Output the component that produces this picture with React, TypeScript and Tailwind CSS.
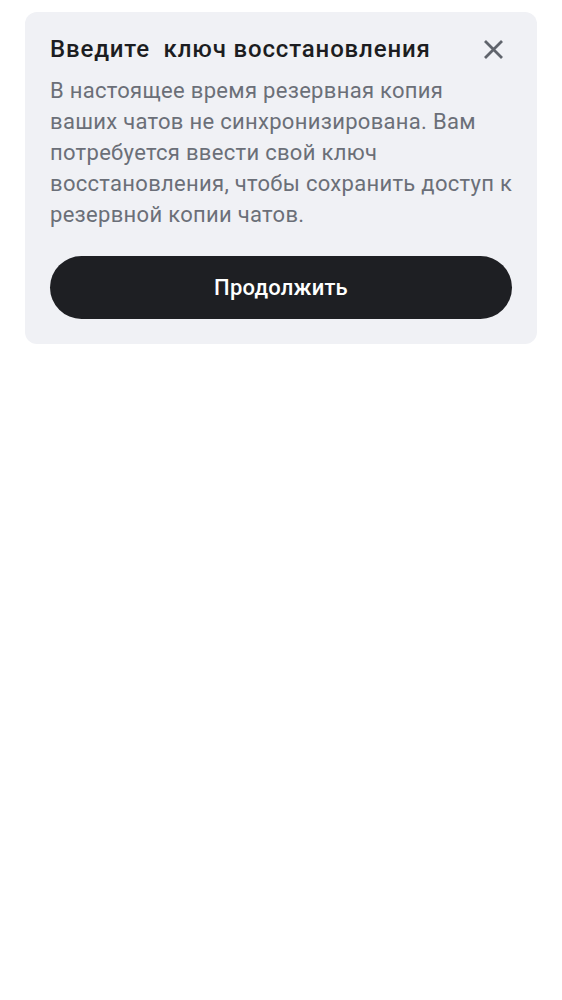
export default function App() {
  return (
    <div className="min-h-[1000px] bg-white px-[25px] pt-[12px]" style={{ fontFamily: "Roboto, 'Noto Sans', sans-serif" }}>
      <div className="rounded-[12px] bg-[#f0f1f5] px-[25px] pt-[22px] pb-[25px]">
        <div className="flex items-start justify-between">
          <h2 className="text-[24px] leading-[30px] font-medium tracking-[0.85px] text-[#1c1d21]">
            Введите&nbsp; ключ восстановления
          </h2>
          <button className="mt-[6px] mr-[9px] text-[#60646c]" aria-label="Закрыть">
            <svg width="19" height="19" viewBox="0 0 19 19" fill="none" stroke="currentColor" strokeWidth="2.8">
              <path d="M1 1L18 18M18 1L1 18" />
            </svg>
          </button>
        </div>
        <p className="mt-[11px] mr-[-2px] text-[22px] leading-[31px] tracking-[0.3px] text-[#6b6f78]">
          В настоящее время резервная копия ваших чатов не синхронизирована. Вам потребуется ввести свой ключ
          восстановления, чтобы сохранить доступ к резервной копии чатов.
        </p>
        <button className="mt-[26px] flex h-[63px] w-full items-center justify-center rounded-full bg-[#1e1f23] text-[22px] font-medium tracking-[0.2px] text-white">
          Продолжить
        </button>
      </div>
    </div>
  );
}
